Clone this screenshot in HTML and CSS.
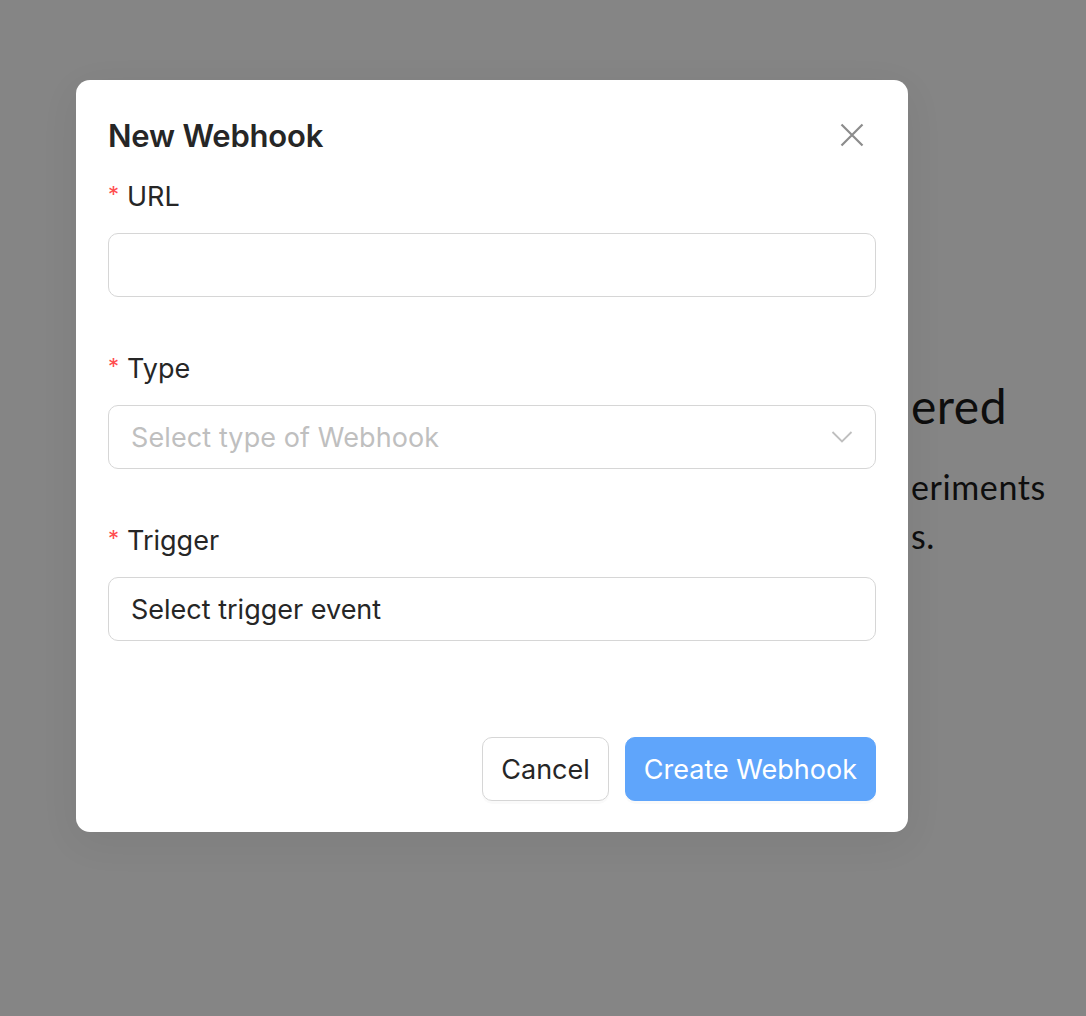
FILE: index.html
```html
<!DOCTYPE html>
<html>
<head>
<meta charset="utf-8">
<link rel="stylesheet" href="styles.css">
</head>
<body>
<main class="page">
  <section class="empty">
    <div class="line heading"><span class="pre">No webhooks regist</span><span class="post">ered</span></div>
    <div class="line text t1"><span class="pre">Webhooks notify you of exp</span><span class="post">eriments</span></div>
    <div class="line text t2"><span class="pre">and their result</span><span class="post">s.</span></div>
  </section>
</main>
<div class="overlay"></div>
<div class="modal-wrap">
  <div class="modal">
    <header class="modal-head">
      <h2 class="modal-title">New Webhook</h2>
      <button class="close" aria-label="Close">
        <svg width="24" height="24" viewBox="0 0 24 24"><path d="M1.5 1.5 L22.5 22.5 M22.5 1.5 L1.5 22.5" stroke="#8c8c8c" stroke-width="2.2" fill="none"/></svg>
      </button>
    </header>
    <form class="form">
      <div class="item">
        <label class="label"><span class="req">*</span>URL</label>
        <div class="input"></div>
      </div>
      <div class="item">
        <label class="label"><span class="req">*</span>Type</label>
        <div class="input select">
          <span class="placeholder">Select type of Webhook</span>
          <svg class="chev" width="22" height="14" viewBox="0 0 22 14"><path d="M1.5 2 L11 11.5 L20.5 2" stroke="#bfbfbf" stroke-width="1.8" fill="none"/></svg>
        </div>
      </div>
      <div class="item">
        <label class="label"><span class="req">*</span>Trigger</label>
        <div class="input"><span class="value">Select trigger event</span></div>
      </div>
    </form>
    <footer class="modal-foot">
      <button class="btn">Cancel</button>
      <button class="btn primary">Create Webhook</button>
    </footer>
  </div>
</div>
</body>
</html>
```

FILE: styles.css
```css
* { box-sizing: border-box; }
html, body { margin: 0; padding: 0; }
body {
  width: 1086px;
  height: 1016px;
  background: #ffffff;
  font-family: Inter, "Liberation Sans", sans-serif;
  overflow: hidden;
  position: relative;
}
.page {
  padding-top: 374px;
}
.empty {
  font-family: Lato, "Noto Sans", sans-serif;
  color: #1c1c1c;
}
.line {
  display: grid;
  grid-template-columns: 890px auto;
  white-space: nowrap;
}
.line .pre { text-align: right; }
.line .post { margin-left: 21px; }
.heading {
  font-size: 48px;
  line-height: 64px;
  letter-spacing: 0.5px;
}
.text {
  font-size: 34px;
  line-height: 49px;
  letter-spacing: 0.6px;
}
.t1 { margin-top: 24px; }
.overlay {
  position: absolute;
  inset: 0;
  background: rgba(0, 0, 0, 0.48);
}
.modal-wrap {
  position: absolute;
  left: 76px;
  top: 80px;
}
.modal {
  width: 832px;
  height: 752px;
  background: #fff;
  border-radius: 14px;
  padding: 32px 32px 31px 32px;
  display: flex;
  flex-direction: column;
  box-shadow: 0 10px 40px rgba(0,0,0,0.06);
}
.modal-head {
  display: flex;
  justify-content: space-between;
  align-items: center;
  height: 46px;
}
.modal-title {
  margin: 0;
  font-size: 31px;
  font-weight: 600;
  color: #262626;
  letter-spacing: -0.2px;
}
.close {
  border: 0;
  background: none;
  padding: 0;
  width: 24px;
  height: 24px;
  margin-right: 12px;
  display: flex;
}
.form {
  display: flex;
  flex-direction: column;
  gap: 56px;
  margin-top: 23px;
}
.item {
  display: flex;
  flex-direction: column;
  gap: 20px;
}
.label {
  font-size: 27px;
  line-height: 32px;
  color: #262626;
  display: flex;
  align-items: center;
}
.req {
  color: #ff4d4f;
  font-size: 22px;
  margin-right: 8px;
  margin-left: 0;
  position: relative;
  top: -3px;
}
.input {
  height: 64px;
  border: 1.8px solid #d6d6d6;
  border-radius: 10px;
  display: flex;
  align-items: center;
  padding: 0 22px;
  font-size: 27px;
}
.select { justify-content: space-between; }
.placeholder { color: #bfbfbf; letter-spacing: 0.1px; }
.value { color: #262626; }
.chev { margin-right: 0; }
.modal-foot {
  margin-top: auto;
  display: flex;
  justify-content: flex-end;
  gap: 16px;
}
.btn {
  height: 64px;
  border-radius: 10px;
  border: 1.8px solid #d6d6d6;
  background: #fff;
  color: #262626;
  font-family: Inter, "Liberation Sans", sans-serif;
  font-size: 27px;
  padding: 0 18px;
  box-shadow: 0 3px 0 rgba(0,0,0,0.02);
}
.btn.primary {
  background: #5fa5fb;
  border-color: #5fa5fb;
  color: #fff;
}
```
